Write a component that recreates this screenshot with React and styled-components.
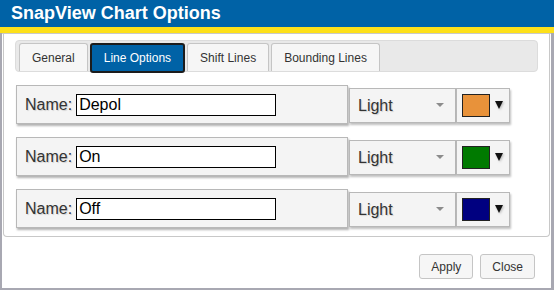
import React from 'react';
import styled, { createGlobalStyle } from 'styled-components';

const GlobalStyle = createGlobalStyle`
    html, body { margin: 0; padding: 0; background: #fff; }
    body { font-family: "Liberation Sans", Arial, sans-serif; }
    * { box-sizing: border-box; }
`;

const lines = [
    { name: 'Depol', weight: 'Light', color: '#e8923a' },
    { name: 'On', weight: 'Light', color: '#007a00' },
    { name: 'Off', weight: 'Light', color: '#000080' },
];

const tabs = ['General', 'Line Options', 'Shift Lines', 'Bounding Lines'];

const App = () => (
    <>
        <GlobalStyle />
        <Dialog>
            <TitleBar>SnapView Chart Options</TitleBar>
            <Body>
                <Panel>
                    <TabBar>
                        {tabs.map(t => (
                            <Tab key={t} active={t === 'Line Options'}>{t}</Tab>
                        ))}
                    </TabBar>
                    <Rows>
                        {lines.map(line => (
                            <Row key={line.name}>
                                <NameBox>
                                    <span>Name:</span>
                                    <NameInput defaultValue={line.name} />
                                </NameBox>
                                <Select>
                                    <span>{line.weight}</span>
                                    <Caret />
                                </Select>
                                <ColorPicker>
                                    <Swatch color={line.color} />
                                    <DropArrow />
                                </ColorPicker>
                            </Row>
                        ))}
                    </Rows>
                </Panel>
                <Footer>
                    <Button>Apply</Button>
                    <Button>Close</Button>
                </Footer>
            </Body>
        </Dialog>
    </>
);

export default App;

const Dialog = styled.div`
    width: 554px;
    height: 290px;
    display: flex;
    flex-direction: column;
    background: #fff;
`;

const TitleBar = styled.div`
    height: 33px;
    padding: 3px 0 0 11px;
    background: #0062a6;
    color: #fff;
    font-weight: bold;
    font-size: 18px;
    line-height: 20px;
    border-bottom: 6px solid #fde01a;
    box-shadow: 0 1px 0 #c9c9c9;
`;

const Body = styled.div`
    flex: 1;
    display: flex;
    flex-direction: column;
    border-left: 2px solid #a8a8b2;
    border-right: 3px solid #a8a8b2;
    border-bottom: 2px solid #a8a8b2;
`;

const Panel = styled.div`
    margin: 0 1px;
    padding: 7px 11px 8px;
    border: 1px solid #c8c8c8;
    border-top: none;
    border-radius: 0 0 4px 4px;
`;

const TabBar = styled.div`
    height: 32px;
    display: flex;
    align-items: flex-end;
    gap: 2px;
    padding: 0 3px;
    background: #e9e9e9;
    border: 1px solid #dcdcdc;
    border-radius: 4px;
`;

const Tab = styled.div`
    height: ${p => (p.active ? '30px' : '28px')};
    margin-bottom: ${p => (p.active ? '-2px' : '0')};
    padding: 0 12px;
    display: flex;
    align-items: center;
    font-size: 12px;
    color: ${p => (p.active ? '#fff' : '#333')};
    background: ${p => (p.active ? '#0062a6' : '#f6f6f6')};
    border: ${p => (p.active ? '2px solid #1c1c1c' : '1px solid #c5c5c5')};
    border-bottom: ${p => (p.active ? '2px solid #1c1c1c' : 'none')};
    border-radius: ${p => (p.active ? '3px' : '3px 3px 0 0')};
`;

const Rows = styled.div`
    display: flex;
    flex-direction: column;
    gap: 13px;
    margin: 13px 0 0 1px;
`;

const Row = styled.div`
    display: flex;
    align-items: flex-start;
`;

const NameBox = styled.div`
    width: 332px;
    height: 39px;
    display: flex;
    align-items: center;
    gap: 4px;
    padding-left: 8px;
    background: #f4f4f4;
    border: 1px solid #b8b8b8;
    box-shadow: 1px 2px 2px rgba(0, 0, 0, 0.3);
    font-size: 16px;
    color: #333;
    text-shadow: 1px 1px 1px rgba(0, 0, 0, 0.15);
`;

const NameInput = styled.input`
    width: 200px;
    height: 22px;
    padding: 0 2px;
    border: 1px solid #000;
    border-radius: 0;
    background: #fff;
    font-family: "Liberation Sans", Arial, sans-serif;
    font-size: 16px;
    color: #000;
    outline: none;
`;

const Select = styled.div`
    width: 107px;
    height: 35px;
    margin: 3px 0 0 1px;
    display: flex;
    align-items: center;
    justify-content: space-between;
    padding: 0 11px 0 8px;
    background: #f4f4f4;
    border: 1px solid #b8b8b8;
    box-shadow: 1px 2px 2px rgba(0, 0, 0, 0.25);
    font-size: 16px;
    color: #333;
    text-shadow: 1px 1px 1px rgba(0, 0, 0, 0.15);
`;

const Caret = styled.span`
    width: 0;
    height: 0;
    margin-top: -2px;
    border-left: 4px solid transparent;
    border-right: 4px solid transparent;
    border-top: 4px solid #8c8c8c;
`;

const ColorPicker = styled.div`
    width: 54px;
    height: 35px;
    margin-top: 3px;
    display: flex;
    align-items: center;
    gap: 5px;
    padding-left: 5px;
    background: #f4f4f4;
    border: 1px solid #b8b8b8;
    box-shadow: 1px 2px 2px rgba(0, 0, 0, 0.25);
`;

const Swatch = styled.span`
    width: 28px;
    height: 23px;
    background: ${p => p.color};
    border: 1px solid #222;
`;

const DropArrow = styled.span`
    width: 0;
    height: 0;
    margin-top: -2px;
    border-left: 4px solid transparent;
    border-right: 4px solid transparent;
    border-top: 8px solid #111;
    filter: drop-shadow(1px 1px 1px rgba(0, 0, 0, 0.25));
`;

const Footer = styled.div`
    display: flex;
    justify-content: flex-end;
    gap: 7px;
    padding: 17px 16px 0 0;
`;

const Button = styled.button`
    height: 25px;
    padding: 0 11px;
    background: #f6f6f6;
    border: 1px solid #c5c5c5;
    border-radius: 3px;
    font-family: "Liberation Sans", Arial, sans-serif;
    font-size: 12px;
    color: #333;
`;
